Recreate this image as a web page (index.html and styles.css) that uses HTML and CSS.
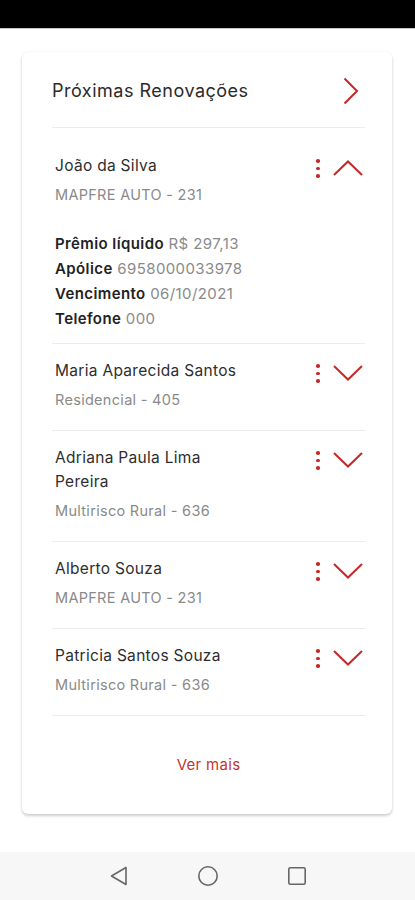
FILE: index.html
```html
<!DOCTYPE html>
<html lang="pt-br">
<head>
    <meta charset="UTF-8">
    <title>Próximas Renovações</title>
    <link rel="stylesheet" href="styles.css">
</head>
<body>
    <div class="status-bar"></div>

    <main class="conteudo">
        <section class="card">
            <header class="card-topo">
                <h2>Próximas Renovações</h2>
                <svg class="seta-direita" width="16" height="28" viewBox="0 0 16 28">
                    <path d="M1.5 1.5 L14 14 L1.5 26.5" fill="none" stroke="#c62828" stroke-width="2"/>
                </svg>
            </header>

            <ul class="lista">
                <li class="item aberto">
                    <div class="item-linha">
                        <div class="item-texto">
                            <p class="nome">João da Silva</p>
                            <p class="produto">MAPFRE AUTO - 231</p>
                        </div>
                        <div class="acoes">
                            <span class="pontos"><i></i><i></i><i></i></span>
                            <svg class="chevron" width="30" height="16" viewBox="0 0 30 16">
                                <path d="M1 15 L15 1.5 L29 15" fill="none" stroke="#c62828" stroke-width="2"/>
                            </svg>
                        </div>
                    </div>
                    <div class="detalhes">
                        <p><b>Prêmio líquido</b> R$ 297,13</p>
                        <p><b>Apólice</b> 6958000033978</p>
                        <p><b>Vencimento</b> 06/10/2021</p>
                        <p><b>Telefone</b> 000</p>
                    </div>
                </li>

                <li class="item">
                    <div class="item-linha">
                        <div class="item-texto">
                            <p class="nome">Maria Aparecida Santos</p>
                            <p class="produto">Residencial - 405</p>
                        </div>
                        <div class="acoes">
                            <span class="pontos"><i></i><i></i><i></i></span>
                            <svg class="chevron" width="30" height="16" viewBox="0 0 30 16">
                                <path d="M1 1 L15 14.5 L29 1" fill="none" stroke="#c62828" stroke-width="2"/>
                            </svg>
                        </div>
                    </div>
                </li>

                <li class="item">
                    <div class="item-linha">
                        <div class="item-texto">
                            <p class="nome">Adriana Paula Lima Pereira</p>
                            <p class="produto">Multirisco Rural - 636</p>
                        </div>
                        <div class="acoes">
                            <span class="pontos"><i></i><i></i><i></i></span>
                            <svg class="chevron" width="30" height="16" viewBox="0 0 30 16">
                                <path d="M1 1 L15 14.5 L29 1" fill="none" stroke="#c62828" stroke-width="2"/>
                            </svg>
                        </div>
                    </div>
                </li>

                <li class="item">
                    <div class="item-linha">
                        <div class="item-texto">
                            <p class="nome">Alberto Souza</p>
                            <p class="produto">MAPFRE AUTO - 231</p>
                        </div>
                        <div class="acoes">
                            <span class="pontos"><i></i><i></i><i></i></span>
                            <svg class="chevron" width="30" height="16" viewBox="0 0 30 16">
                                <path d="M1 1 L15 14.5 L29 1" fill="none" stroke="#c62828" stroke-width="2"/>
                            </svg>
                        </div>
                    </div>
                </li>

                <li class="item">
                    <div class="item-linha">
                        <div class="item-texto">
                            <p class="nome">Patricia Santos Souza</p>
                            <p class="produto">Multirisco Rural - 636</p>
                        </div>
                        <div class="acoes">
                            <span class="pontos"><i></i><i></i><i></i></span>
                            <svg class="chevron" width="30" height="16" viewBox="0 0 30 16">
                                <path d="M1 1 L15 14.5 L29 1" fill="none" stroke="#c62828" stroke-width="2"/>
                            </svg>
                        </div>
                    </div>
                </li>
            </ul>

            <a href="#" class="ver-mais">Ver mais</a>
        </section>
    </main>

    <nav class="nav-bar">
        <svg width="20" height="20" viewBox="0 0 20 20">
            <path d="M17 1.5 L17 18.5 L2.5 10 Z" fill="none" stroke="#666" stroke-width="1.6" stroke-linejoin="round"/>
        </svg>
        <svg width="22" height="22" viewBox="0 0 22 22">
            <circle cx="11" cy="11" r="9.2" fill="none" stroke="#666" stroke-width="1.6"/>
        </svg>
        <svg width="20" height="20" viewBox="0 0 20 20">
            <rect x="1.8" y="1.8" width="16.4" height="16.4" rx="1.5" fill="none" stroke="#666" stroke-width="1.6"/>
        </svg>
    </nav>
</body>
</html>
```

FILE: styles.css
```css
* {
    box-sizing: border-box;
}
body {
    margin: 0;
    background: #fff;
    font-family: Inter, "Noto Sans", sans-serif;
    color: #333;
    min-height: 900px;
    display: flex;
    flex-direction: column;
}
p {
    margin: 0;
}
.status-bar {
    height: 29px;
    background: #000;
    border-bottom: 1px solid #c8c8c8;
}
.conteudo {
    flex: 1;
    padding: 23px 23px 0 22px;
}
.card {
    background: #fff;
    border-radius: 6px;
    box-shadow: 0 2px 3px rgba(0, 0, 0, 0.18), 0 0 2px rgba(0, 0, 0, 0.08);
    padding: 0 27px 0 30px;
    display: flex;
    flex-direction: column;
}
.card-topo {
    display: flex;
    align-items: center;
    justify-content: space-between;
    padding: 25px 6px 22px 0;
    border-bottom: 1px solid #ececec;
}
.card-topo h2 {
    margin: 0;
    font-size: 18px;
    font-weight: 400;
    line-height: 26px;
    color: #2b2b2b;
    letter-spacing: 0.5px;
}
.lista {
    list-style: none;
    margin: 0;
    padding: 0;
}
.item {
    padding: 15px 2px 18px 3px;
    border-bottom: 1px solid #ececec;
}
.item.aberto {
    padding-top: 26px;
    padding-bottom: 12px;
}
.item-linha {
    display: flex;
    justify-content: space-between;
    align-items: flex-start;
}
.item-texto {
    width: 190px;
}
.nome {
    font-size: 15.5px;
    line-height: 24px;
    color: #2e2e2e;
    letter-spacing: 0.3px;
}
.produto {
    margin-top: 5px;
    font-size: 14.5px;
    line-height: 24px;
    color: #8a8a8a;
    letter-spacing: 0.3px;
}
.acoes {
    display: flex;
    align-items: center;
    gap: 13px;
    padding-top: 5px;
}
.pontos {
    display: flex;
    flex-direction: column;
    gap: 4px;
}
.pontos i {
    display: block;
    width: 3.6px;
    height: 3.6px;
    border-radius: 50%;
    background: #c62828;
}
.detalhes {
    margin-top: 24px;
}
.detalhes p {
    font-size: 15px;
    line-height: 25px;
    color: #8a8a8a;
    letter-spacing: 0.4px;
}
.detalhes b {
    font-weight: 600;
    color: #222;
}
.ver-mais {
    align-self: center;
    margin: 38px 0 38px;
    font-size: 15px;
    line-height: 22px;
    color: #c0392b;
    text-decoration: none;
    letter-spacing: 0.3px;
}
.nav-bar {
    height: 48px;
    background: #f7f7f7;
    display: flex;
    align-items: center;
    justify-content: center;
    gap: 68px;
    margin-top: 37px;
}
```
